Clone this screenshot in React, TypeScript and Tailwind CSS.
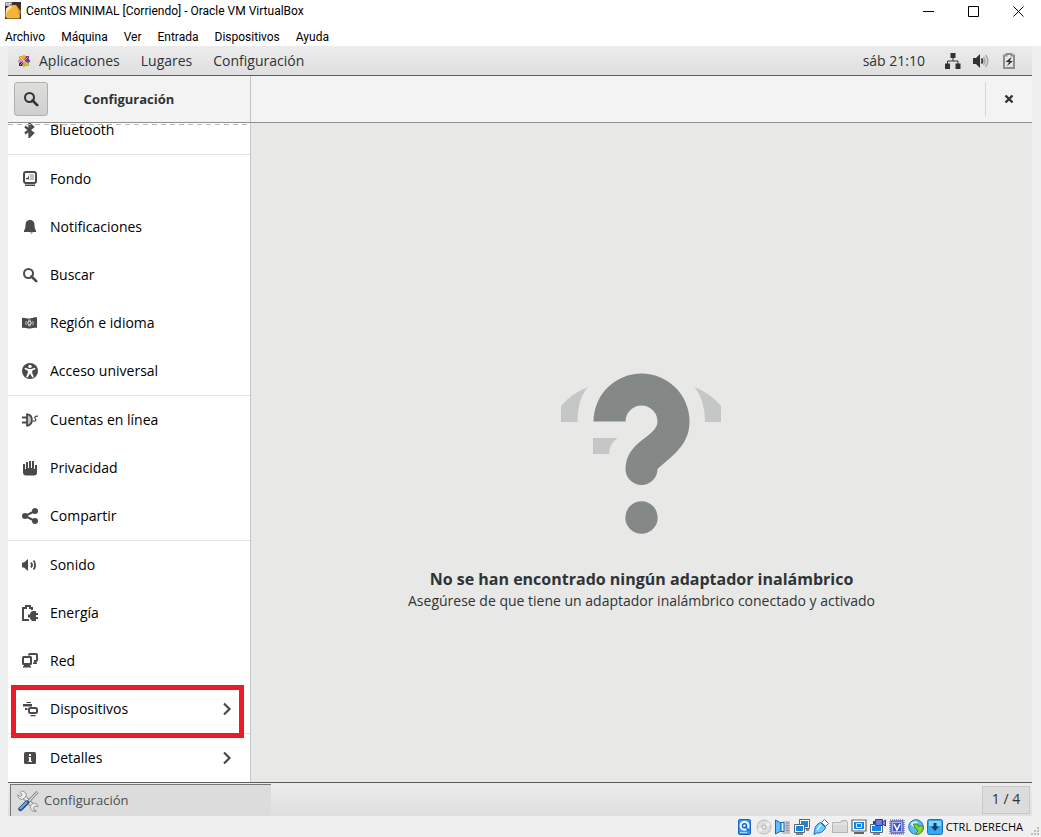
import type { ReactNode } from "react";

type IconProps = { children: ReactNode; className?: string };

function Icon({ children, className = "" }: IconProps) {
  return (
    <svg viewBox="0 0 16 16" className={`size-4 shrink-0 ${className}`} fill="currentColor" aria-hidden="true">
      {children}
    </svg>
  );
}

const bluetooth = (
  <Icon>
    <path d="M3 4.500 11 11 7.500 14.500V1.500L11 5 3 11.500" fill="none" stroke="currentColor" strokeWidth="2.300" />
  </Icon>
);

const background = (
  <Icon>
    <path fillRule="evenodd" d="M4 0h8a3 3 0 0 1 3 3v7a3 3 0 0 1-3 3H4a3 3 0 0 1-3-3V3a3 3 0 0 1 3-3zm0 2a1 1 0 0 0-1 1v7a1 1 0 0 0 1 1h8a1 1 0 0 0 1-1V3a1 1 0 0 0-1-1z" />
    <path d="M4 7h1.500L7 4v4H4z" />
    <path d="M7 3h5v6H8V4H7zM4 8h4v1H4z" opacity=".35" />
    <path d="M3 13.500h10V15H3z" />
  </Icon>
);

const bell = (
  <Icon>
    <path d="M7 1h2c2.500.8 3.500 2.500 3.500 5 0 3 .5 4 1.500 5.500V13H2v-1.500C3 10 3.500 9 3.500 6 3.500 3.500 4.500 1.800 7 1z" />
    <path d="M8 13.500h3L9.500 14.700z" />
  </Icon>
);

const search = (
  <Icon>
    <circle cx="6.500" cy="6.500" r="4.500" fill="none" stroke="currentColor" strokeWidth="2" />
    <path d="m9.500 9.500 4.700 4.700" stroke="currentColor" strokeWidth="2.600" strokeLinecap="round" />
  </Icon>
);

const flag = (
  <Icon>
    <path d="M0 3c3-1 5 1 8 .5S13 2 15 2.500V13c-2-.5-4 .5-7 .5S3 12 0 13z" />
    <circle cx="7.500" cy="8" r="1.700" fill="none" stroke="#fff" />
    <path d="M4.500 6c-1 1.300-1 3 0 4.300M10.500 6c1 1.300 1 3 0 4.300M6 5.200h3M6 10.800h3" fill="none" stroke="#fff" strokeWidth=".7" />
  </Icon>
);

const accessibility = (
  <Icon>
    <circle cx="8" cy="8" r="8" />
    <circle cx="8" cy="3.400" r="1.700" fill="#fff" />
    <path d="M3 4.700 7 6h2l4-1.300.5 1.400-3.300 1.600v2.200l1.700 4-1.600.6L8 10.500l-2.300 4-1.600-.6 1.700-4V7.700L2.500 6.100z" fill="#fff" />
  </Icon>
);

const accounts = (
  <Icon>
    <path d="M5 2v12c7-1 7-11 0-12z" opacity=".35" />
    <path d="M5 1.500v13M5 2.200c6.500 1 6.500 10.600 0 11.600M0 5.500h4.500M0 10.500h4.500" fill="none" stroke="currentColor" strokeWidth="1.800" />
    <path d="M10.500 9c3 .5 4-.5 3-1.800s-1.500-3.200 2.500-3" fill="none" stroke="currentColor" strokeWidth="1.200" />
  </Icon>
);

const hand = (
  <Icon>
    <path d="M1 4h2v5h1V2h2v6h1V1h2v7h1V1h2v8h1V5h2v7.500c0 2-1 3-3 3H4c-2 0-3-1-3-3z" />
  </Icon>
);

const share = (
  <Icon>
    <path d="M13 3 3 8l10 5" fill="none" stroke="currentColor" strokeWidth="2" />
    <circle cx="13" cy="3" r="3" />
    <circle cx="3" cy="8" r="3" />
    <circle cx="13" cy="13" r="3" />
  </Icon>
);

const sound = (
  <Icon>
    <path d="M0 5.500h2L6 2v12l-4-3.500H0z" />
    <path d="M9 5.500c1.200 1.500 1.200 3.500 0 5M11.500 3.500c2.200 2.500 2.200 6.500 0 9" fill="none" stroke="currentColor" strokeWidth="1.800" />
  </Icon>
);

const power = (
  <Icon>
    <path d="M10 5V3H8V1H4v2H1v12h6" fill="none" stroke="currentColor" strokeWidth="2" />
    <path d="M14 6v2h2v2h-2v2h2v2h-2v2h-3.500C9 15.500 8.200 14.300 8 12.500H6v-3h2C8.200 7.500 9.500 6 11 6z" />
  </Icon>
);

const network = (
  <Icon>
    <path d="M7 2.500V1.800C7 1.300 7.300 1 8 1h6c.7 0 1 .3 1 1v5c0 .6-.3 1-1 1h-2M13 8v2" fill="none" stroke="currentColor" strokeWidth="2" />
    <path d="M11 9.500h4V11h-4z" />
    <path fillRule="evenodd" d="M1.500 3h7A1.500 1.500 0 0 1 10 4.500v6A1.500 1.500 0 0 1 8.500 12H8v1h1v1.500H1V13h1v-1h-.5A1.500 1.500 0 0 1 0 10.500v-6A1.500 1.500 0 0 1 1.500 3zM2 5v5h6V5z" />
  </Icon>
);

const devices = (
  <Icon>
    <path d="M4.500 1H9v1H4.500zM1 3h9v2.500H1zM3 7h2.500v2H3z" />
    <rect x="7" y="7" width="8" height="5" rx="1.500" fill="none" stroke="currentColor" strokeWidth="2" />
    <path d="M8.500 14h5v1.300h-5z" />
  </Icon>
);

const info = (
  <Icon>
    <rect x="2" y="2" width="12" height="12" rx="1.500" />
    <path d="M7 4h2v2H7zM6.500 7H9v4h1v1H6.500v-1H7V8h-.5z" fill="#fff" />
  </Icon>
);

const chevron = (
  <Icon>
    <path d="m5 2.500 5.500 5.500L5 13.500" fill="none" stroke="currentColor" strokeWidth="2.200" />
  </Icon>
);

type Item = { label: string; icon: ReactNode; submenu?: boolean; marked?: boolean };

const groups: Item[][] = [
  [{ label: "Bluetooth", icon: bluetooth }],
  [
    { label: "Fondo", icon: background },
    { label: "Notificaciones", icon: bell },
    { label: "Buscar", icon: search },
    { label: "Región e idioma", icon: flag },
    { label: "Acceso universal", icon: accessibility },
  ],
  [
    { label: "Cuentas en línea", icon: accounts },
    { label: "Privacidad", icon: hand },
    { label: "Compartir", icon: share },
  ],
  [
    { label: "Sonido", icon: sound },
    { label: "Energía", icon: power },
    { label: "Red", icon: network },
    { label: "Dispositivos", icon: devices, submenu: true, marked: true },
  ],
  [{ label: "Detalles", icon: info, submenu: true }],
];

function VmLogo() {
  return (
    <svg viewBox="0 0 16 18" className="h-[18px] w-4" aria-hidden="true">
      <path d="M0 0h16v17H0z" fill="#3a2f2a" />
      <path d="M1 6.500 6 3h5l4.500 6-1 7.500H2.500L.5 15z" fill="#f5b53c" />
      <path d="m6 3 1 2-5 5-1.500 5L1 6.500z" fill="#fde4a3" />
      <path d="m11 3 4.500 6-1 7.500-1-7z" fill="#d98a1e" />
      <path d="M0 0h7v4H0z" fill="#8d9199" />
      <path d="M1 1.500h1.500M3.500 1.500H6M1 3h4" stroke="#fff" strokeWidth=".8" />
    </svg>
  );
}

function CentosLogo() {
  return (
    <Icon>
      <path d="M8 1.500 10 3.500v3.800L8 8 6 7.300V3.500z" fill="#e9a33b" />
      <path d="M14.500 8l-2 2H8.700L8 8l.7-2h3.800z" fill="#7d3b94" />
      <path d="M8 14.500l-2-2V8.700L8 8l2 .7v3.800z" fill="#e9a33b" />
      <path d="M1.500 8l2-2h3.800L8 8l-.7 2H3.500z" fill="#d38bb8" />
      <path d="M3 3h3l1.500 4.500L3 6z" fill="#e3a63c" />
      <path d="M10 3h3v3L8.500 7.500z" fill="#8f2f86" />
      <path d="M13 10v3h-3L8.500 8.500z" fill="#9ac43b" />
      <path d="M3 10l4.500-1.500L6 13H3z" fill="#29286f" />
      <path d="m4 4 8 8M12 4l-8 8" stroke="#f1e9ee" strokeWidth=".6" />
    </Icon>
  );
}

function MissingAdapter() {
  return (
    <svg viewBox="0 0 161 161" className="size-[161px]" aria-hidden="true">
      <g fill="#c5c7c6">
        <path d="M0 33Q11 20 27 14Q16.500 26 16.500 49H0z" />
        <path d="M160 33Q149 20 133.500 14Q144 27 144 49H160z" />
        <path d="M32 65H56.500Q48 71 48 81H32z" />
      </g>
      <g fill="#848887">
        <path d="M32.500 48.500A48 48 0 0 1 128.500 48.500C128.500 72 112 82 96.500 96A16 16 0 0 1 64.500 96C64.500 68 96.500 64 96.500 48.500A16 16 0 0 0 64.500 48.500z" />
        <circle cx="80.500" cy="144.500" r="16.200" />
      </g>
    </svg>
  );
}

function ToolsIcon() {
  return (
    <svg viewBox="0 0 22 22" className="size-[22px]" aria-hidden="true">
      <path d="m6.500 6.500 10 10" stroke="#888a85" strokeWidth="4.400" />
      <path d="m6.500 6.500 10 10" stroke="#e6e7e4" strokeWidth="2.600" />
      <path d="M2.200 1.600 5 4.200 4.300 6 2.500 6.500.8 4.500C.5 7.500 2.500 9.800 6 9.200L9.300 6C9.600 2.800 7 .8 4 1.200M15 20.500c-2-1.500-2.200-5 0-6.500s5.500-.8 6 2.500l-3-.5-1.500 1.500.5 2.500 2.500 1c-1.500.5-3.300.4-4.500-.5z" fill="#eeeeec" stroke="#888a85" strokeWidth=".9" />
      <path d="m20.500 2-9.500 10" stroke="#777b78" strokeWidth="3" />
      <path d="m20.300 2.200-9.500 10" stroke="#d3d7cf" strokeWidth="1.500" />
      <path d="m10 12.500-6.500 6.500" stroke="#204a87" strokeWidth="4.400" strokeLinecap="round" />
      <path d="m9.500 12.500-6 6" stroke="#7aa6de" strokeWidth="2" strokeLinecap="round" />
    </svg>
  );
}

const statusIcons: { label: string; icon: ReactNode }[] = [
  {
    label: "Discos duros",
    icon: (
      <Icon>
        <rect x="1.500" y=".5" width="12" height="15" rx="1.500" fill="#2b9bf0" stroke="#1b62c8" />
        <circle cx="7.500" cy="6.700" r="5" fill="#e6f5ff" />
        <circle cx="7.500" cy="6.700" r="2" fill="#fff" stroke="#1b62c8" strokeWidth="1.400" />
        <path d="m8 7.500 4 4.500" stroke="#1b62c8" strokeWidth="1.500" />
        <path d="M3 13.500h7" stroke="#9fdcff" />
      </Icon>
    ),
  },
  {
    label: "Unidades ópticas",
    icon: (
      <Icon>
        <circle cx="8" cy="8" r="7" fill="#dedede" stroke="#bcbcbc" />
        <path d="m8 8 4-5.500L14.500 6zM8 8l-4 5.500L1.500 10z" fill="#f0f0f0" />
        <circle cx="8" cy="8" r="2" fill="#f4f4f4" stroke="#aaa" />
      </Icon>
    ),
  },
  {
    label: "Audio",
    icon: (
      <Icon>
        <path d="M8 2h7v13H7z" fill="#c4c4c4" />
        <path d="M11 4h3M11 6.500h3M11 9h3M11 11.500h3" stroke="#8a8a8a" />
        <path d="M.5 1 6 4v8L.5 15z" fill="#58c3fb" stroke="#1b62c8" />
        <path d="M6 3.500h3v9H6z" fill="#d8f2ff" stroke="#1b62c8" />
      </Icon>
    ),
  },
  {
    label: "Red",
    icon: (
      <Icon>
        <path d="M5.500.5h10v9h-10z" fill="#fff" stroke="#606468" />
        <path d="M7 2h7v6H7z" fill="#1287e8" />
        <path d="M12 11h3" stroke="#606468" strokeWidth="1.500" />
        <path d="M.5 5.500h10v8H.5z" fill="#fff" stroke="#606468" />
        <path d="M2 7h7v5H2z" fill="#1287e8" />
        <path d="M2 15h7" stroke="#606468" strokeWidth="1.500" />
      </Icon>
    ),
  },
  {
    label: "USB",
    icon: (
      <Icon>
        <path d="m8.500 3.500 3-3 4 4-3 3z" fill="#fff" stroke="#666" />
        <path d="M7.500 3.500 12.500 8.500C10.500 13 7 14.500 3.500 14L1 15.500 1.500 12.500C1.500 8 4 5 7.500 3.500z" fill="#6acbff" stroke="#1b62c8" />
        <path d="M4.500 11c.5-2 2-4 4-5" fill="none" stroke="#d8f5ff" strokeWidth="1.500" />
      </Icon>
    ),
  },
  {
    label: "Carpetas compartidas",
    icon: (
      <Icon>
        <path d="M.5 3.500h8l1-2h5l1 2v10H.5z" fill="#d9d9d9" stroke="#b5b5b5" />
        <path d="M1 5h14" stroke="#efefef" />
      </Icon>
    ),
  },
  {
    label: "Pantalla",
    icon: (
      <Icon>
        <path d="M1 1h14v11H1z" fill="#fff" stroke="#606468" strokeWidth="1.200" />
        <path d="M3 3h10v7H3z" fill="#1287e8" />
        <path d="M5.500 4.500h5v4h-5z" fill="none" stroke="#cdeaff" />
        <path d="M3 14h10" stroke="#606468" strokeWidth="2" />
      </Icon>
    ),
  },
  {
    label: "Grabación",
    icon: (
      <Icon>
        <path d="M.5 5.500h12v8H.5z" fill="#fff" stroke="#606468" />
        <path d="M2 7h9v5H2z" fill="#1287e8" />
        <path d="M3 15h7" stroke="#606468" strokeWidth="1.500" />
        <path d="M5.500.5h7v6h-7z" fill="#6f7be0" stroke="#303b9c" />
        <path d="m12.500 3 3-2v6l-3-2z" fill="#8992ea" stroke="#303b9c" />
        <path d="M3 2h2v3H3z" fill="#303b9c" />
      </Icon>
    ),
  },
  {
    label: "Virtualización",
    icon: (
      <Icon>
        <rect x="1" y="1" width="14" height="14" fill="none" stroke="#3540ad" strokeWidth="1" strokeDasharray="1 1" />
        <rect x="2" y="2" width="12" height="12" rx="1" fill="#aab4ee" stroke="#3540ad" />
        <rect x="4" y="4" width="8" height="8" fill="#4454c8" />
        <path d="m5 5 3 6 3-6" fill="none" stroke="#fff" strokeWidth="1.600" />
      </Icon>
    ),
  },
  {
    label: "Integración del ratón",
    icon: (
      <Icon>
        <circle cx="8" cy="8" r="7.300" fill="#55bdf3" stroke="#2874b8" />
        <path d="M2.500 5C5 1.500 9 1.500 10 4L5 8z" fill="#d4f2ff" />
        <path d="M5.500 5h4l1 2.500 2-1 3 1.500c0 4-3 7-6 7.500L8 14l2-2-3.500-4z" fill="#84d42e" stroke="#3c8622" />
      </Icon>
    ),
  },
  {
    label: "Captura del teclado",
    icon: (
      <Icon>
        <rect x=".5" y=".5" width="15" height="15" rx="2" fill="#35aaf0" stroke="#1b70b8" />
        <path d="M2 2h12v5H2z" fill="#86d4fb" />
        <path d="M6.500 4h3v3.500H12l-4 4.500-4-4.500h2.500z" fill="#123b68" />
      </Icon>
    ),
  },
];

function SidebarItem({ item }: { item: Item }) {
  return (
    <li className="relative">
      <button type="button" className="flex h-12 w-full items-center gap-3 pr-[15px] pl-[14px] text-left leading-[14px] text-black">
        <span className="text-[#4a4a4a]">{item.icon}</span>
        {item.label}
        {item.submenu && <span className="ml-auto text-[#4a4a4a]">{chevron}</span>}
      </button>
      {item.marked && (
        <span className="pointer-events-none absolute top-0 right-[6px] -bottom-[5px] left-[3px] z-10 border-5 border-[#ed1c24]" />
      )}
    </li>
  );
}

export default function App() {
  return (
    <div className="flex h-screen flex-col overflow-hidden bg-[#f0f0f0] font-['Open_Sans',sans-serif] text-sm text-[#2e3436]">
      <header className="bg-white font-['Roboto',sans-serif] text-[12px] text-black">
        <div className="flex h-[22px] items-center pl-[5px]">
          <VmLogo />
          <h1 className="ml-[5px] leading-5">CentOS MINIMAL [Corriendo] - Oracle VM VirtualBox</h1>
          <div className="ml-auto flex">
            <button type="button" aria-label="Minimizar" className="flex h-5 w-[45px] items-center justify-center">
              <svg viewBox="0 0 11 11" className="size-[11px]" stroke="currentColor"><path d="M0 5.500h11" /></svg>
            </button>
            <button type="button" aria-label="Maximizar" className="flex h-5 w-[45px] items-center justify-center">
              <svg viewBox="0 0 11 11" className="size-[11px]" stroke="currentColor" fill="none"><path d="M.5.5h10v10H.5z" /></svg>
            </button>
            <button type="button" aria-label="Cerrar" className="flex h-5 w-[45px] items-center justify-center">
              <svg viewBox="0 0 11 11" className="size-[11px]" stroke="currentColor"><path d="m.5.5 10 10m0-10-10 10" /></svg>
            </button>
          </div>
        </div>
        <nav className="flex h-6 items-center gap-4 pt-[6px] pb-px pl-[5px] leading-4">
          {["Archivo", "Máquina", "Ver", "Entrada", "Dispositivos", "Ayuda"].map((label) => (
            <button type="button" key={label}>{label}</button>
          ))}
        </nav>
      </header>

      <main className="mr-[9px] ml-2 flex min-h-0 flex-1 flex-col">
        <div className="flex h-[30px] shrink-0 items-center border-b border-[#5c5c5c] bg-linear-to-b from-[#ececec] to-[#dfdfdf] pr-[15px] pl-2">
          <CentosLogo />
          <nav className="ml-[7px] flex gap-[21px]">
            <button type="button">Aplicaciones</button>
            <button type="button">Lugares</button>
            <button type="button">Configuración</button>
          </nav>
          <time className="mr-5 ml-auto">sáb 21:10</time>
          <div className="flex gap-3">
            <Icon>
              <path d="M5.500 0h5v5h-5zM0 10.500h5V16H0zM10.500 10.500h5V16h-5z" />
              <path d="M8 5v3M2.500 11V8h10.500v3" fill="none" stroke="currentColor" />
            </Icon>
            <Icon>
              <path d="M0 5h3l4-4v14l-4-4H0z" />
              <path d="M8.500 5.500c1.200 1.500 1.200 3.500 0 5" fill="none" stroke="currentColor" strokeWidth="1.800" />
              <path d="M10.500 4c1.800 2.500 1.800 5.500 0 8M12.500 2c3 3.500 3 8.500 0 12" fill="none" stroke="#aaa" strokeWidth="1.600" />
            </Icon>
            <Icon>
              <path d="M3 2.500h2.500V1h5v1.500H13V15H3z" fill="none" stroke="#8c8f90" strokeWidth="2" />
              <path d="M10.500 4 4.500 9H8l-2 4 6-5H9z" />
            </Icon>
          </div>
        </div>

        <div className="flex h-[47px] shrink-0 border-b border-[#8f918c] bg-[#f3f3f3]">
          <div className="relative flex w-[243px] items-center justify-center border-r border-[#c4c5c2]">
            <button
              type="button"
              aria-label="Buscar"
              className="absolute left-[6px] flex size-[34px] items-center justify-center rounded-[3px] border border-[#aeb0ac] bg-linear-to-b from-[#dededc] to-[#cfcfcd]"
            >
              {search}
            </button>
            <h2 className="text-[13px] font-bold">Configuración</h2>
          </div>
          <div className="my-[6px] ml-auto flex w-[47px] items-center justify-center border-l border-[#d6d6d6]">
            <button type="button" aria-label="Cerrar configuración">
              <svg viewBox="0 0 10 10" className="size-[10px]" stroke="currentColor"><path d="m1.500 1.500 7 7m0-7-7 7" strokeWidth="2.400" /></svg>
            </button>
          </div>
        </div>

        <div className="flex min-h-0 flex-1">
          <nav className="relative flex w-[243px] shrink-0 flex-col justify-end overflow-hidden border-r border-[#c9cac7] bg-white">
            <div className="absolute top-px right-0 left-0 z-10 h-px bg-[repeating-linear-gradient(90deg,#b9b9b9_0_5px,transparent_5px_9px)]" />
            {groups.map((group, index) => (
              <ul key={group[0].label} className={index > 0 ? "border-t border-[#e2e2e2]" : ""}>
                {group.map((item) => (
                  <SidebarItem key={item.label} item={item} />
                ))}
              </ul>
            ))}
          </nav>
          <section className="flex flex-1 flex-col items-center justify-center bg-[#e8e8e6] pt-[79px] text-center">
            <MissingAdapter />
            <h3 className="mt-[33px] text-base leading-6 font-bold">No se han encontrado ningún adaptador inalámbrico</h3>
            <p className="leading-5">Asegúrese de que tiene un adaptador inalámbrico conectado y activado</p>
          </section>
        </div>

        <div className="flex h-[34px] shrink-0 items-center border-t border-[#5c5c5c] bg-linear-to-b from-[#ececec] to-[#dfdfdf] px-[2px]">
          <button
            type="button"
            className="mt-px flex h-8 w-[261px] items-center gap-[5px] border-t border-l border-[#757575] bg-[#dcdcdc] pl-[6px] text-[13px] text-[#4a4e50]"
          >
            <ToolsIcon />
            Configuración
          </button>
          <button type="button" className="ml-auto h-7 w-12 border border-[#c8c8c8] bg-[#dcdcdc] pb-[2px]">1 / 4</button>
        </div>
      </main>

      <footer className="flex h-[21px] shrink-0 items-center justify-end gap-[3px] text-[11px] text-black">
        {statusIcons.map(({ label, icon }) => (
          <button type="button" key={label} aria-label={label}>{icon}</button>
        ))}
        <span>CTRL DERECHA</span>
        <svg viewBox="0 0 10 10" className="ml-[5px] size-[10px] self-end" fill="#bdbdbd" aria-hidden="true">
          <path d="M6 0h2v2H6zM3 3h2v2H3zM6 3h2v2H6zM0 6h2v2H0zM3 6h2v2H3zM6 6h2v2H6z" />
        </svg>
      </footer>
    </div>
  );
}
